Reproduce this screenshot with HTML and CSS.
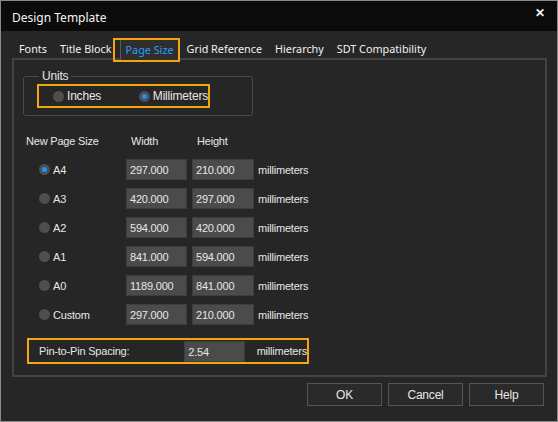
FILE: index.html
```html
<!DOCTYPE html>
<html lang="en">
<head>
  <meta charset="UTF-8">
  <title>Design Template</title>
  <link rel="stylesheet" href="styles.css">
</head>
<body>
  <div class="window">
    <div class="titlebar">
      <span class="title">Design Template</span>
      <span class="close">✕</span>
    </div>

    <div class="tabs">
      <span class="tab">Fonts</span>
      <span class="tab">Title Block</span>
      <span class="tab active"><span class="inner">Page Size</span></span>
      <span class="tab">Grid Reference</span>
      <span class="tab">Hierarchy</span>
      <span class="tab">SDT Compatibility</span>
    </div>

    <div class="panel">
      <fieldset class="units">
        <legend>Units</legend>
        <div class="hl unit-opts">
          <label class="radio"><span class="dot"></span>Inches</label>
          <label class="radio on"><span class="dot"></span>Millimeters</label>
        </div>
      </fieldset>

      <div class="sizes">
        <div class="head">New Page Size</div>
        <div class="head pad">Width</div>
        <div class="head pad">Height</div>
        <div></div>

        <label class="radio on"><span class="dot"></span>A4</label>
        <div class="field">297.000</div>
        <div class="field">210.000</div>
        <div>millimeters</div>

        <label class="radio"><span class="dot"></span>A3</label>
        <div class="field">420.000</div>
        <div class="field">297.000</div>
        <div>millimeters</div>

        <label class="radio"><span class="dot"></span>A2</label>
        <div class="field">594.000</div>
        <div class="field">420.000</div>
        <div>millimeters</div>

        <label class="radio"><span class="dot"></span>A1</label>
        <div class="field">841.000</div>
        <div class="field">594.000</div>
        <div>millimeters</div>

        <label class="radio"><span class="dot"></span>A0</label>
        <div class="field">1189.000</div>
        <div class="field">841.000</div>
        <div>millimeters</div>

        <label class="radio"><span class="dot"></span>Custom</label>
        <div class="field">297.000</div>
        <div class="field">210.000</div>
        <div>millimeters</div>
      </div>

      <div class="hl pin">
        <span class="pin-label">Pin-to-Pin Spacing:</span>
        <div class="field pin-field">2.54</div>
        <span>millimeters</span>
      </div>
    </div>

    <div class="buttons">
      <button>OK</button>
      <button>Cancel</button>
      <button>Help</button>
    </div>
  </div>
</body>
</html>
```

FILE: styles.css
```css
body {
  margin: 0;
  background: #262626;
  font-family: 'Liberation Sans', Arial, sans-serif;
  font-size: 11px;
  letter-spacing: -0.2px;
  color: #e6e6e6;
}
.window {
  width: 558px;
  height: 422px;
  box-sizing: border-box;
  border: 1px solid #8a8a8a;
  background: #262626;
}
.titlebar {
  height: 30px;
  background: #0b0b0b;
  display: flex;
  justify-content: space-between;
  padding: 0 12px 0 11px;
  font-family: 'Noto Sans', 'Open Sans', sans-serif;
  letter-spacing: 0;
  color: #f4f4f4;
}
.title {
  font-size: 12px;
  line-height: 34px;
}
.close {
  font-size: 12px;
  line-height: 24px;
  font-weight: bold;
}
.tabs {
  display: flex;
  align-items: flex-start;
  height: 27px;
  box-sizing: border-box;
  padding: 8px 0 0 11px;
  font-family: 'Noto Sans', 'Open Sans', sans-serif;
  font-size: 10.8px;
  line-height: 20px;
  letter-spacing: 0;
  color: #f2f2f2;
}
.tab {
  padding: 0 6px 0 7px;
}
.tab.active {
  border: 2px solid #f5a30f;
  padding: 0;
  margin: -1px 0 0 -5px;
}
.tab.active .inner {
  display: block;
  height: 20px;
  padding: 0 4px 0 5px;
  border-left: 1px solid #5a5a5a;
  background: #2e2e2e;
  color: #2e9bf5;
  margin-left: 5px;
}
.panel {
  margin-left: 11px;
  width: 535px;
  height: 319px;
  box-sizing: border-box;
  border: 2px solid #434343;
  padding: 0 0 0 12px;
}
.units {
  margin: 10px 0 0 -3px;
  width: 230px;
  height: 46px;
  box-sizing: border-box;
  border: 1px solid #4a4a4a;
  border-radius: 3px;
  padding: 0 0 0 13px;
}
.units legend {
  padding: 0 3px;
  margin-left: 2px;
  font-size: 12px;
  line-height: 12px;
}
.hl {
  border: 2px solid #f5a30f;
  box-sizing: border-box;
}
.unit-opts {
  display: flex;
  align-items: center;
  width: 173px;
  height: 24px;
  margin-top: 2px;
  padding-left: 14px;
}
.unit-opts .radio:first-child {
  width: 88px;
}
.radio {
  display: flex;
  align-items: center;
  gap: 3px;
  font-size: 12px;
}
.dot {
  width: 11px;
  height: 11px;
  border-radius: 50%;
  background: #4e4e4e;
  display: flex;
  align-items: center;
  justify-content: center;
}
.radio.on .dot::after {
  content: '';
  width: 5px;
  height: 5px;
  border-radius: 50%;
  background: #1e90ff;
}
.sizes {
  display: grid;
  grid-template-columns: 95px 61px 62px auto;
  column-gap: 5px;
  grid-auto-rows: 29px;
  align-items: center;
  margin-top: 10px;
  font-size: 11px;
}
.sizes .head {
  height: 22px;
  line-height: 22px;
}
.sizes .pad {
  padding-left: 5px;
}
.sizes .radio {
  padding-left: 13px;
  font-size: 11px;
}
.sizes > div:nth-child(4n) {
  margin-left: -1px;
}
.field {
  height: 21px;
  line-height: 21px;
  box-sizing: border-box;
  background: #4b4b4b;
  border: 1px solid #3d3d3d;
  padding-left: 3px;
  color: #e8e8e8;
}
.pin {
  display: flex;
  align-items: center;
  width: 282px;
  height: 26px;
  margin: 9px 0 0 1px;
  padding-left: 10px;
}
.pin-label {
  width: 147px;
}
.pin-field {
  width: 61px;
  margin-right: 12px;
}
.buttons {
  display: flex;
  justify-content: flex-end;
  gap: 6px;
  padding: 6px 13px 0 0;
}
button {
  width: 75px;
  height: 23px;
  background: #2a2a2a;
  border: 1px solid #555;
  color: #e6e6e6;
  font-family: 'Liberation Sans', Arial, sans-serif;
  font-size: 12px;
  letter-spacing: -0.2px;
  padding: 0;
}
```
